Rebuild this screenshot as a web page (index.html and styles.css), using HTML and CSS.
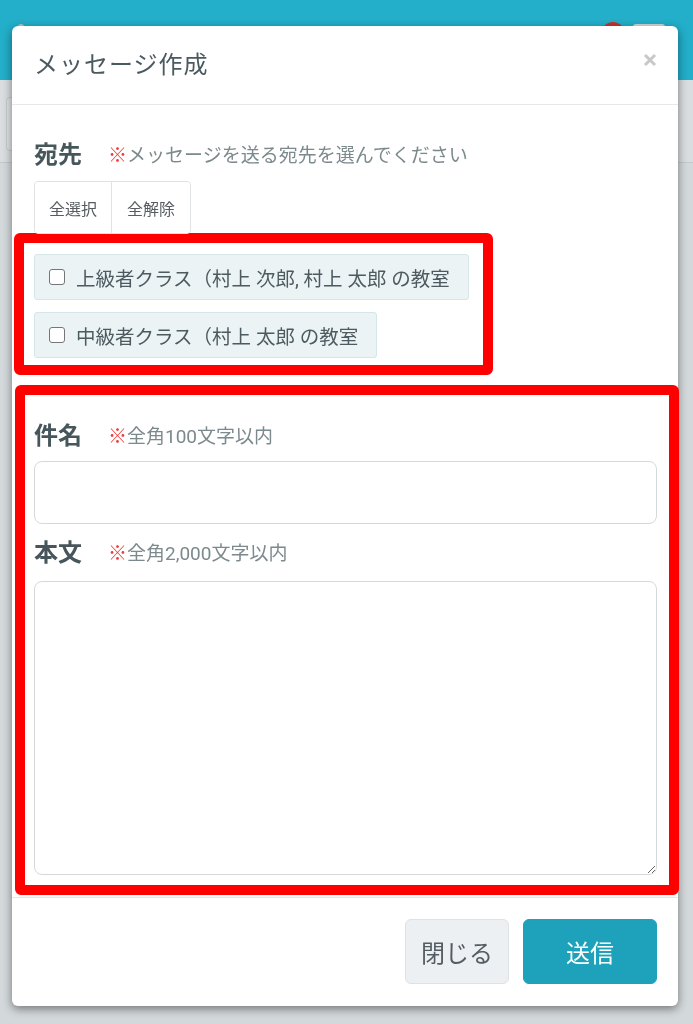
FILE: index.html
```html
<!DOCTYPE html>
<html lang="ja">
<head>
<meta charset="utf-8">
<title>メッセージ作成</title>
<link rel="stylesheet" href="styles.css">
</head>
<body>
<header class="topbar">
  <span class="topbar-dot"></span>
  <div class="topbar-right">
    <span class="avatar"></span>
    <span class="menu-btn"></span>
  </div>
</header>
<div class="subbar">
  <span class="subbar-box"></span>
</div>

<div class="backdrop">
  <div class="modal">
    <div class="modal-header">
      <h2 class="modal-title">メッセージ作成</h2>
      <button class="close" type="button" aria-label="close">
        <svg width="14" height="14" viewBox="0 0 14 14"><path d="M2 2L12 12M12 2L2 12" stroke="#c8c8c8" stroke-width="3" stroke-linecap="butt"/></svg>
      </button>
    </div>
    <div class="modal-body">
      <div class="field-head">
        <span class="field-label">宛先</span>
        <span class="note"><span class="mark">※</span>メッセージを送る宛先を選んでください</span>
      </div>
      <div class="btn-group">
        <button type="button" class="btn-seg">全選択</button>
        <button type="button" class="btn-seg">全解除</button>
      </div>
      <div class="highlight hl-recipients">
        <label class="recipient"><input type="checkbox" class="check"><span>上級者クラス（村上 次郎, 村上 太郎 の教室</span></label>
        <label class="recipient"><input type="checkbox" class="check"><span>中級者クラス（村上 太郎 の教室</span></label>
      </div>
      <div class="highlight hl-content">
        <div class="field-head">
          <span class="field-label">件名</span>
          <span class="note"><span class="mark">※</span>全角100文字以内</span>
        </div>
        <input type="text" class="text-input">
        <div class="field-head field-head-body">
          <span class="field-label">本文</span>
          <span class="note"><span class="mark">※</span>全角2,000文字以内</span>
        </div>
        <textarea class="text-area"></textarea>
      </div>
    </div>
    <div class="modal-footer">
      <button type="button" class="btn btn-close">閉じる</button>
      <button type="button" class="btn btn-send">送信</button>
    </div>
  </div>
</div>
</body>
</html>
```
FILE: styles.css
```css
* { box-sizing: border-box; }

html, body {
  margin: 0;
  padding: 0;
}

body {
  background: #d3d8db;
  font-family: Roboto, "Noto Sans CJK JP", sans-serif;
  color: #4a595e;
  height: 1024px;
  overflow: hidden;
}

.topbar {
  height: 80px;
  background: #23aec9;
  display: flex;
  justify-content: space-between;
  align-items: flex-start;
  padding: 22px 28px 0 18px;
}

.topbar-dot {
  width: 6px;
  height: 6px;
  border-radius: 50%;
  background: #b8c3c6;
  margin-top: 2px;
}

.topbar-right {
  display: flex;
  gap: 8px;
  align-items: flex-start;
}

.avatar {
  width: 24px;
  height: 24px;
  border-radius: 50%;
  background: #c9302c;
}

.menu-btn {
  width: 32px;
  height: 26px;
  margin-top: 2px;
  border-radius: 3px;
  background: #cfd7da;
}

.subbar {
  height: 83px;
  background: #d9dde0;
  border-bottom: 1px solid #c3c8cb;
  padding: 17px 0 0 6px;
}

.subbar-box {
  display: block;
  width: 40px;
  height: 54px;
  border: 1px solid #c7cbce;
  border-radius: 4px;
  background: #dfe2e4;
}

.backdrop {
  position: fixed;
  inset: 0;
  padding: 26px 15px 0 12px;
}

.modal {
  width: 666px;
  background: #fff;
  border-radius: 6px;
  box-shadow: 0 3px 10px rgba(0, 0, 0, 0.45);
}

.modal-header {
  height: 79px;
  border-bottom: 1px solid #e6e8ea;
  display: flex;
  align-items: center;
  justify-content: space-between;
  padding: 0 21px 5px 22px;
}

.modal-title {
  margin: 0;
  font-size: 24px;
  font-weight: 400;
  color: #4b5a5f;
  letter-spacing: 1px;
}

.close {
  background: none;
  border: 0;
  padding: 0;
  width: 14px;
  height: 14px;
  display: flex;
  margin-right: 0;
  margin-top: -6px;
}

.modal-body {
  padding: 32px 21px 2px 22px;
}

.field-head {
  height: 36px;
  display: flex;
  align-items: center;
  gap: 26px;
}

.field-label {
  font-size: 24px;
  font-weight: 700;
  color: #46565b;
  line-height: 36px;
}

.note {
  font-size: 19px;
  color: #7c898d;
  line-height: 36px;
  padding-top: 2px;
}

.mark {
  color: #ee3b3b;
}

.btn-group {
  display: inline-flex;
  margin-top: 8px;
  border: 1px solid #dfe3e6;
  border-radius: 4px;
  height: 53px;
  vertical-align: top;
}

.btn-seg {
  background: #fff;
  border: 0;
  font-family: inherit;
  font-size: 16px;
  color: #555d61;
  padding: 0 14px;
  height: 51px;
  border-radius: 4px;
}

.btn-seg + .btn-seg {
  border-left: 1px solid #dfe3e6;
  border-radius: 0 4px 4px 0;
  padding: 0 15px;
}

.highlight {
  border: 10px solid #ff0000;
  border-radius: 6px;
}

.hl-recipients {
  width: 479px;
  margin: -1px 0 0 -20px;
  padding: 11px 0 7px 10px;
  display: flex;
  flex-direction: column;
  align-items: flex-start;
  gap: 12px;
}

.recipient {
  display: flex;
  align-items: center;
  height: 46px;
  padding: 0 18px 0 14px;
  background: #ebf3f5;
  border: 1px solid #d6e5e9;
  border-radius: 3px;
  font-size: 19.5px;
  color: #4d5b60;
  white-space: nowrap;
}

.check {
  appearance: none;
  -webkit-appearance: none;
  width: 16px;
  height: 16px;
  margin: 0 11px 0 0;
  border: 1.5px solid #767676;
  border-radius: 3px;
  background: #fff;
}

.hl-content {
  margin: 10px -22px 0 -19px;
  padding: 23px 12px 10px 9px;
}

.text-input {
  display: block;
  width: 100%;
  height: 63px;
  margin-top: 7px;
  border: 1px solid #d6d9dc;
  border-radius: 8px;
  background: #fff;
}

.field-head-body {
  margin-top: 11px;
}

.text-area {
  display: block;
  width: 100%;
  height: 294px;
  margin-top: 10px;
  border: 1px solid #d6d9dc;
  border-radius: 8px;
  background: #fff;
}

.modal-footer {
  border-top: 1px solid #e6e8ea;
  display: flex;
  justify-content: flex-end;
  gap: 14px;
  padding: 21px 21px 22px 0;
}

.btn {
  height: 65px;
  border-radius: 6px;
  font-family: inherit;
  font-size: 24px;
}

.btn-close {
  width: 104px;
  background: #edf0f3;
  border: 1px solid #dde2e6;
  color: #545d62;
}

.btn-send {
  width: 134px;
  background: #1ea2bb;
  border: 1px solid #1ea2bb;
  color: #fff;
}
```
